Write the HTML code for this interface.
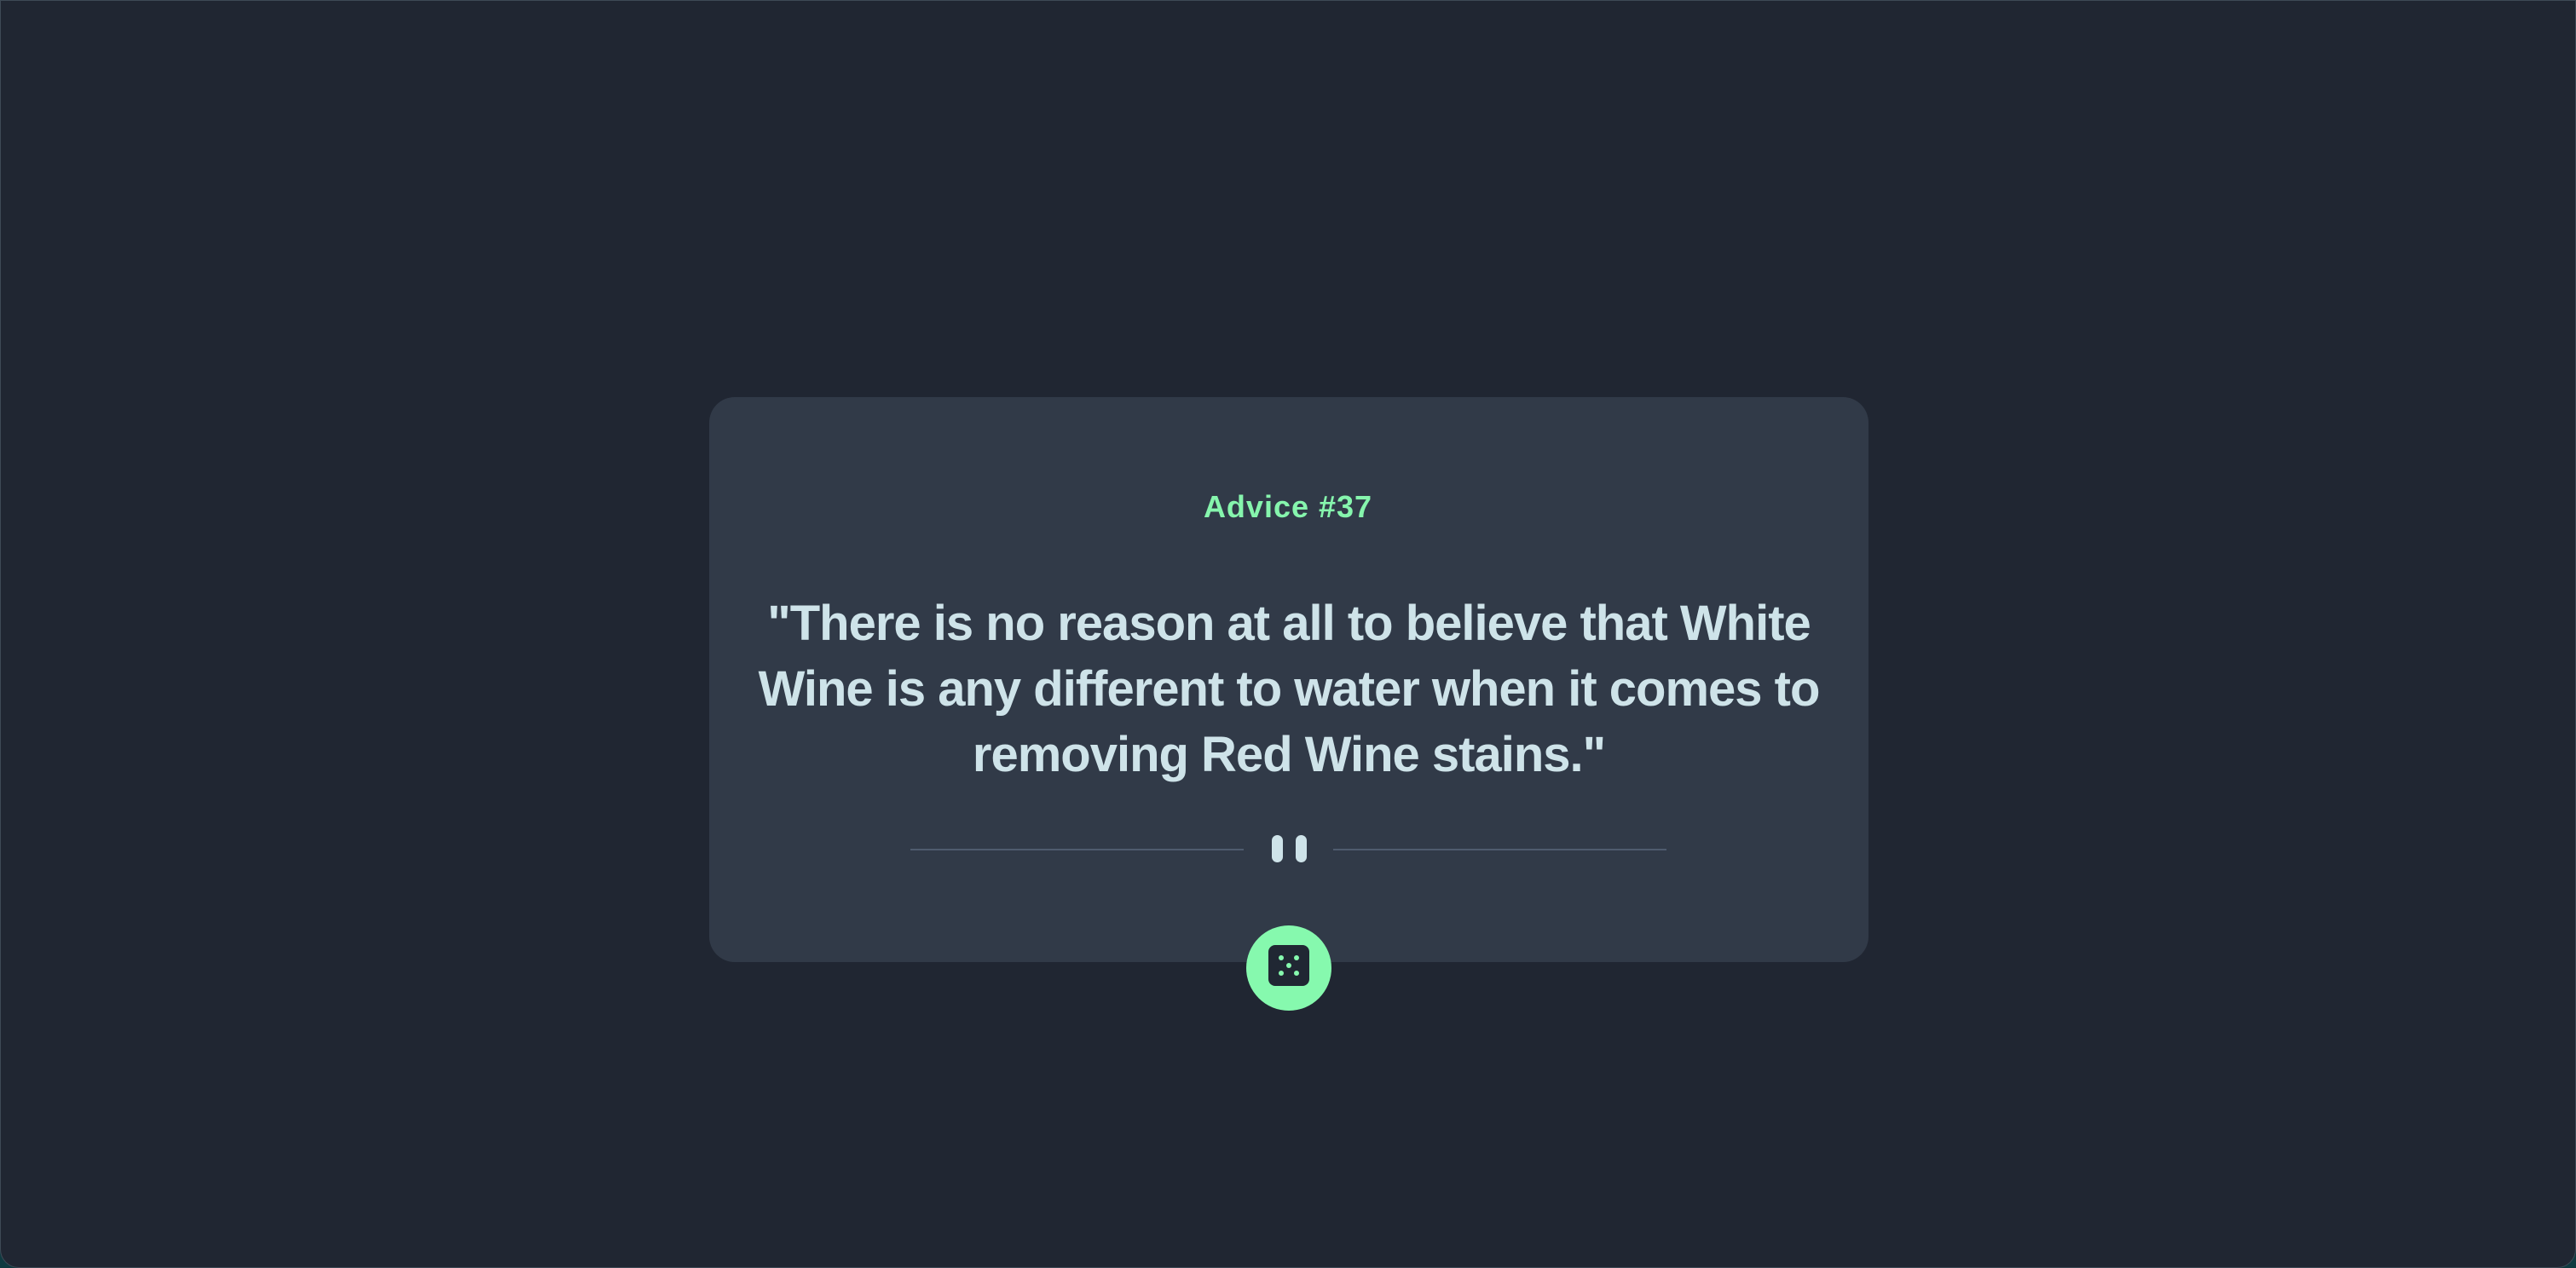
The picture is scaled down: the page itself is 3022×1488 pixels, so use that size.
<!DOCTYPE html>
<html><head><meta charset="utf-8"><style>
html,body{margin:0;padding:0;}
body{width:3022px;height:1488px;background:#0f3a40;overflow:hidden;font-family:"Liberation Sans",sans-serif;}
.screen{position:absolute;left:0;top:0;width:3020px;height:1486px;background:#202632;border:1px solid #3e4a56;border-radius:0 0 22px 22px;}
.card{position:absolute;left:832px;top:466px;width:1360px;height:663px;background:#313a48;border-radius:30px;}
.adv{position:absolute;left:0;right:0;top:574px;text-align:center;color:#86f5ad;font-weight:bold;font-size:36px;letter-spacing:1px;}
.q{position:absolute;left:832px;width:1360px;top:693px;text-align:center;color:#cee3e9;font-weight:bold;font-size:58px;line-height:77px;letter-spacing:-1px;}
.line{position:absolute;top:996px;height:2px;background:#4f5b6e;}
.bar{position:absolute;top:980px;width:13px;height:32px;border-radius:7px;background:#cee3e9;}
.btn{position:absolute;left:1462px;top:1086px;width:100px;height:100px;border-radius:50%;background:#86f9ae;}
.die{position:absolute;left:26px;top:23px;width:48px;height:48px;border-radius:8px;background:#202733;}
.d{position:absolute;width:6px;height:6px;border-radius:50%;background:#86f9ae;}
</style></head><body>
<div class="screen"></div>
<div class="card"></div>
<div class="adv">Advice #37</div>
<div class="q">"There is no reason at all to believe that White<br>Wine is any different to water when it comes to<br>removing Red Wine stains."</div>
<div class="line" style="left:1068px;width:391px"></div>
<div class="line" style="left:1564px;width:391px"></div>
<div class="bar" style="left:1492px"></div>
<div class="bar" style="left:1520px"></div>
<div class="btn"><div class="die">
<div class="d" style="left:12px;top:12px"></div>
<div class="d" style="left:30px;top:12px"></div>
<div class="d" style="left:21px;top:21px"></div>
<div class="d" style="left:12px;top:30px"></div>
<div class="d" style="left:30px;top:30px"></div>
</div></div>
</body></html>
